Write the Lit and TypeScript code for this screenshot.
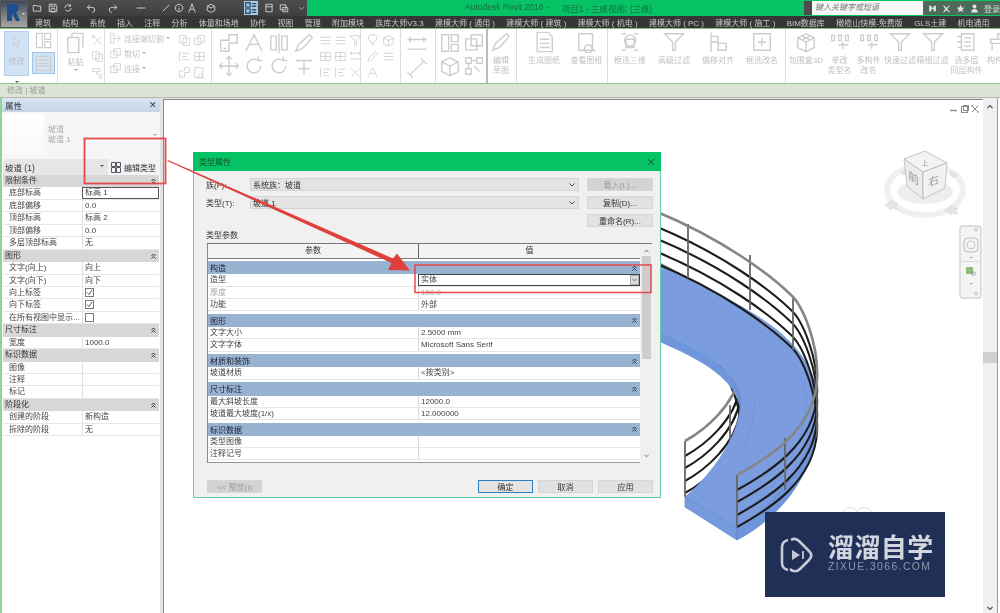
import { LitElement, html, css, svg } from 'lit';
import { customElement } from 'lit/decorators.js';

// generic ribbon glyphs, 16x16, drawn in a washed out grey because the ribbon is disabled
const glyphs: Record<string, string> = {
  cols: 'M2 2h5v12H2zM9 2h5v5H9zM9 9h5v5H9z',
  sheet: 'M3 1h8l3 3v11H3zM5 6h7M5 9h7M5 12h7',
  plan: 'M2 2h12v12H2zM4 5h8M4 8h8M2 10h12',
  paste: 'M2 4h8v11H2zM5 1h8v10M5 4V1',
  cut: 'M3 3l10 10M13 3L3 13M2 2h2v2H2z',
  copy: 'M2 2h8v9H2zM6 5h8v9H6z',
  brush: 'M2 3h9v4H2zM7 7v3h3v5h3v-5',
  link: 'M2 5h8v8H2zM6 2h8v8H6z',
  join: 'M2 2h4v12H2zM6 8h8M10 4l4 4-4 4',
  rect: 'M2 3h12v10H2zM2 8h12M8 3v10',
  move: 'M8 1v14M1 8h14M8 1L6 3M8 1l2 2M8 15l-2-2M8 15l2-2M1 8l2-2M1 8l2 2M15 8l-2-2M15 8l-2 2',
  rotate: 'M13 8a5 5 0 1 1-2-4M11 1v3h3',
  mirror: 'M8 1v14M6 3H2v10h4zM10 3h4v10h-4z',
  offset: 'M2 14V6h6V2h6v6H8v6zM4 12h2',
  split: 'M2 14L8 2l6 12M5 9h6',
  trim: 'M2 4h12M8 4v10M4 10h8',
  align: 'M2 2v12M5 4h9M5 8h6M5 12h8',
  cross: 'M3 3l10 10M13 3L3 13',
  bulb: 'M8 1a4 4 0 0 1 2 8v2H6V9a4 4 0 0 1 2-8zM6 13h4',
  pen: 'M2 14l2-5 8-7 2 2-7 8z',
  lines: 'M2 4h12M2 8h12M2 12h12',
  dim: 'M1 4h14M1 11h14M3 2v4M13 2v4',
  diag: 'M3 13L13 3M1 11l4 4M11 1l4 4',
  box: 'M2 5l6-3 6 3v7l-6 3-6-3zM2 5l6 3 6-3M8 8v7',
  nodes: 'M2 2h4v4H2zM10 2h4v4h-4zM2 10h4v4H2zM6 4h4M4 6v4M8 8l4 4',
  filter: 'M1 2h14L9 8v6H7V8z',
  mag: 'M2 2h10v12H2zM9 10a3 3 0 1 0 .1 0M11 12l3 3',
  cube3: 'M2 2h3M11 2h3M2 14h3M11 14h3M5 6h6v6H5zM8 3a4 4 0 1 0 .1 0',
  offsetAlign: 'M3 1v14M3 4h5v4H3M8 9h6v5H8z',
  rename: 'M2 2h12v12H2zM5 8h6M8 5v6',
  bbox: 'M2 5l6-3 6 3v7l-6 3-6-3zM2 5l6 3 6-3M8 8v7M5 3.5l6 3M11 3.5l-6 3',
  code: 'M2 3h2v4H2zM7 3h2v4H7zM12 3h2v4h-2zM7 10h7M10 8v5',
  list: 'M4 2h9v12H4zM1 4h3M1 8h3M1 12h3M6 5h5M6 8h5M6 11h5',
  desk: 'M2 6h12v3H2zM3 9v5M13 9v5M7 2h2v4H7z',
};

const qatIcons: [string, number][] = [
  ['M2 4h5l1 1h6v8H2z', 36], ['M2 2h10l2 2v10H2zM5 2v4h6V2M5 9h6v5H5z', 52], ['M3 8a5 5 0 0 1 9-3M13 8a5 5 0 0 1-9 3M12 2v3H9', 67],
  ['M2 7h8a4 4 0 0 1 0 8M2 7l4-4M2 7l4 4', 90], ['M14 7H6a4 4 0 0 0 0 8M14 7l-4-4M14 7l-4 4', 112], ['M1 8h14', 140],
  ['M3 13L13 3', 165], ['M8 2a6 6 0 1 0 .1 0M8 5v1M8 8v4', 178], ['M3 15L8 1l5 14M5 10h6', 191], ['M2 5l6-3 6 3v7l-6 3-6-3zM2 5l6 3 6-3', 210],
  ['M8 8h.1', 232], ['M2 2h5v5H2zM9 3h5M9 6h5M2 9h5v5H2zM9 10h5M9 13h5', 248], ['M3 2h10v12H3zM3 6h10', 268], ['M2 3h9v8H2zM6 7h8v7H6z', 283], ['M3 6l5 5 5-5', 302],
];

const tabs = ['建筑', '结构', '系统', '插入', '注释', '分析', '体量和场地', '协作', '视图', '管理', '附加模块', '族库大师V3.3', '建模大师 ( 通用 )',
  '建模大师 ( 建筑 )', '建模大师 ( 机电 )', '建模大师 ( PC )', '建模大师 ( 施工 )', 'BIM数据库', '橄榄山快模-免费版', 'GLS土建', '机电通用'];

type Row = { t: string; v?: string; check?: boolean; box?: boolean };
type Group = { name: string; rows: Row[] };

const propGroups: Group[] = [
  { name: '限制条件', rows: [{ t: '底部标高', v: '标高 1', box: true }, { t: '底部偏移', v: '0.0' }, { t: '顶部标高', v: '标高 2' }, { t: '顶部偏移', v: '0.0' }, { t: '多层顶部标高', v: '无' }] },
  { name: '图形', rows: [{ t: '文字(向上)', v: '向上' }, { t: '文字(向下)', v: '向下' }, { t: '向上标签', check: true }, { t: '向下标签', check: true }, { t: '在所有视图中显示...', check: false }] },
  { name: '尺寸标注', rows: [{ t: '宽度', v: '1000.0' }] },
  { name: '标识数据', rows: [{ t: '图像' }, { t: '注释' }, { t: '标记' }] },
  { name: '阶段化', rows: [{ t: '创建的阶段', v: '新构造' }, { t: '拆除的阶段', v: '无' }] },
];

const typeGroups: Group[] = [
  { name: '构造', rows: [{ t: '造型', v: '实体', box: true }, { t: '厚度', v: '150.0' }, { t: '功能', v: '外部' }] },
  { name: '图形', rows: [{ t: '文字大小', v: '2.5000 mm' }, { t: '文字字体', v: 'Microsoft Sans Serif' }] },
  { name: '材质和装饰', rows: [{ t: '坡道材质', v: '<按类别>' }] },
  { name: '尺寸标注', rows: [{ t: '最大斜坡长度', v: '12000.0' }, { t: '坡道最大坡度(1/x)', v: '12.000000' }] },
  { name: '标识数据', rows: [{ t: '类型图像' }, { t: '注释记号' }] },
];

const OUTER_RAIL = 'M737 475C768 458 814 430 817 380C819 345 803 305 790 294C770 275 725 240 655 211';
const INNER_RAIL = 'M685 441C705 430 735 405 740 373C741 350 725 318 713 303C700 290 680 272 655 262';
const OUTER_POSTS = [[737, 475, 527], [785, 438, 490], [817, 385, 437], [793, 297, 350], [750, 255, 310], [688, 224, 278]];
const INNER_POSTS = [[685, 441, 497], [730, 405, 455], [713, 303, 358]];

@customElement('app-root')
export class AppRoot extends LitElement {
  static styles = css`
    :host {
      display: block;
      font-family: 'Liberation Sans', 'Noto Sans CJK SC', sans-serif;
      font-size: 8px;
      color: #333;
    }
    .app {
      position: relative;
      width: 1000px;
      height: 613px;
      overflow: hidden;
      background: #fff;
      display: flex;
      flex-direction: column;
      filter: blur(0.35px);
    }

    /* title + tabs */
    .head { display: flex; height: 29px; background: #363636; flex: none; }
    .logo {
      width: 28px; height: 28px; flex: none;
      background: linear-gradient(#3d4a5c, #8e8e8e 70%, #a5a5a5);
      border: 1px solid #555; box-sizing: border-box;
    }
    .head-right { flex: 1; display: flex; flex-direction: column; min-width: 0; }
    .titlebar { height: 16px; display: flex; align-items: center; background: #07c365; }
    .qat { width: 279px; height: 16px; flex: none; background: linear-gradient(#4d4d4d, #3f3f3f); display: flex; align-items: center; padding-left: 5px; box-sizing: border-box; }
    .qat-item { display: flex; justify-content: flex-start; flex: none; }
    .qat-item svg { width: 10px; height: 10px; fill: none; stroke: #cfcfcf; stroke-width: 1.5; margin-left: -1px; }
    .qat-item.on svg { background: #a5cdee; stroke: #33506b; width: 14px; height: 14px; }
    .doc { display: flex; gap: 13px; padding-left: 158px; font-size: 8.5px; color: #176b41; white-space: nowrap; flex: none; width: 497px; box-sizing: border-box; }
    .search { display: flex; height: 14px; flex: none; }
    .search-tag { width: 8px; background: #4c4c4c; }
    .search-box { width: 111px; background: #f7f7f7; color: #777; font-style: italic; font-size: 8px; line-height: 13px; padding-left: 3px; box-sizing: border-box; }
    .user { flex: 1; display: flex; align-items: center; gap: 5px; padding-left: 5px; height: 14px; background: #4d6b5a; color: #ddd; overflow: hidden; white-space: nowrap; }
    .user svg { width: 9px; height: 9px; flex: none; fill: #e4e4e4; }
    .tabs { height: 13px; display: flex; gap: 11.3px; padding-left: 7px; align-items: center; color: #c8c8c8; white-space: nowrap; font-size: 8px; overflow: hidden; }

    /* ribbon */
    .ribbon { height: 56px; flex: none; display: flex; background: #fff; border-top: 1px solid #7cc47c; border-bottom: 1px solid #8fcb7f; box-sizing: border-box; margin-top: -1px; color: #c2c2c2; overflow: hidden; }
    .panel { flex: none; height: 100%; border-right: 1px solid #dcdcdc; box-sizing: border-box; display: flex; }
    .panel svg, .tool svg { fill: none; stroke: #cdcdcd; stroke-width: 1; flex: none; }
    .sm svg { width: 13px; height: 13px; }
    .md svg { width: 19px; height: 19px; }
    .lg svg { width: 22px; height: 22px; }
    .grid { display: grid; justify-items: center; align-items: center; align-content: start; }
    .modify { width: 25px; height: 45px; margin: 2px 0 0 4px; background: #d0e3f5; border: 1px solid #b5d0ea; box-sizing: border-box; display: flex; flex-direction: column; align-items: center; gap: 7px; padding-top: 3px; }
    .modify-more { text-align: center; padding: 2px 0 0 4px; }
    .stack2 { display: flex; flex-direction: column; gap: 2px; margin: 2px 0 0 3px; align-items: center; }
    .picked { width: 23px; height: 22px; background: #d0e3f5; border: 1px solid #9fc4e6; box-sizing: border-box; display: flex; align-items: center; justify-content: center; }
    .paste { display: flex; flex-direction: column; align-items: center; width: 30px; padding: 3px 0 0 3px; gap: 2px; }
    .car { width: 0; height: 0; border: 2px solid transparent; border-top: 2.5px solid #aaa; display: inline-block; }
    .car.dark { border-top-color: #555; }
    .text-tools { display: flex; flex-direction: column; gap: 2px; padding: 3px 0 0 4px; width: 64px; }
    .text-tool { display: flex; align-items: center; gap: 2px; height: 13px; white-space: nowrap; }
    .tool { display: flex; flex-direction: column; align-items: center; text-align: center; flex: none; padding-top: 2px; gap: 3px; line-height: 10px; }

    .options { height: 14px; flex: none; background: #dde4d6; border-bottom: 1px solid #b7b9b0; box-sizing: border-box; padding-left: 7px; line-height: 13px; color: #9a9a9a; }

    /* main */
    .main { flex: 1; display: flex; min-height: 0; background: #e2e2e2; }

    .props { width: 160px; flex: none; background: #fff; border-left: 2px solid #8ed49a; box-sizing: border-box; display: flex; flex-direction: column; }
    .props-head { height: 14px; flex: none; display: flex; justify-content: space-between; align-items: center; padding: 0 3px; background: linear-gradient(#d9e4ef, #c6d5e5); color: #334; font-size: 8.5px; }
    .preview { height: 47px; flex: none; display: flex; gap: 4px; padding-left: 1px; background: #f6f6f6; color: #aaa; }
    .thumb { width: 41px; height: 40px; margin-top: 2px; background: linear-gradient(#fff, #f9f9f9); }
    .preview-name { padding-top: 13px; line-height: 10px; flex: 1; }
    .preview-car { align-self: center; margin: 0 3px 0 0; }
    .pick { height: 16px; flex: none; display: flex; }
    .pick-val { width: 105px; margin-left: 1px; background: #e6e6e6; display: flex; justify-content: space-between; align-items: center; padding: 0 4px 0 2px; box-sizing: border-box; font-size: 8.5px; }
    .pick-btn { flex: 1; display: flex; gap: 3px; align-items: center; padding-left: 3px; background: #f3f3f3; font-size: 8px; }
    .pick-btn svg { width: 10px; height: 11px; fill: none; stroke: #556; }
    .sec { height: 12.45px; background: #d7d7d7; margin-left: 1px; width: 156px; display: flex; justify-content: space-between; align-items: center; padding: 0 3px 0 2px; box-sizing: border-box; line-height: 12px; }
    .sec svg, .grp svg { width: 5px; height: 6px; fill: none; stroke: #333; stroke-width: 1; }
    .prop { height: 12.45px; display: grid; grid-template-columns: 79px 77px; margin-left: 1px; width: 156px; border-bottom: 1px solid #e6e6e6; box-sizing: border-box; line-height: 11px; color: #444; }
    .prop > div { padding-left: 6px; white-space: nowrap; overflow: hidden; }
    .prop > div + div { border-left: 1px solid #e0e0e0; padding-left: 2px; }
    .prop .boxed { outline: 1px solid #555; outline-offset: -1px; }
    .chk { width: 9px; height: 9px; border: 1px solid #777; box-sizing: border-box; margin: 1px 0 0 0; display: block; background: #fff; }
    .chk svg { display: block; width: 7px; height: 7px; fill: none; stroke: #555; stroke-width: 1; }

    .split { width: 3px; flex: none; }
    .canvas { flex: 1; position: relative; background: #fff; border-top: 1px solid #8a8a8a; border-left: 1px solid #8a8a8a; margin-top: 1px; min-width: 0; }
    .canvas > svg { display: block; }
    .vbar { width: 14px; flex: none; background: #f0f0f0; display: flex; flex-direction: column; align-items: center; }
    .vbar-thumb { width: 14px; height: 11px; background: #cfcfcf; margin-top: 243px; }
    .vbar svg { width: 6px; height: 5px; fill: none; stroke: #555; stroke-width: 1.2; }
    .vbar .vbar-end { margin-top: auto; margin-bottom: 2px; }
    .vbar .vbar-start { margin-top: 6px; }
    .edge { width: 3px; flex: none; background: #fff; border-left: 1px solid #999; box-sizing: border-box; }

    /* dialog */
    .dialog { position: absolute; left: 193px; top: 152px; width: 468px; height: 346px; box-sizing: border-box; background: #f0f0f0; border: 1px solid #62d0a5; border-top: 0; display: flex; flex-direction: column; }
    .dlg-title { height: 19px; flex: none; margin: 0 -1px; background: #06c365; display: flex; justify-content: space-between; align-items: center; padding: 0 6px; color: #14532f; font-size: 8px; }
    .dlg-title svg { width: 8px; height: 8px; stroke: #14532f; stroke-width: 1; fill: none; }
    .dlg-top { display: grid; grid-template-columns: 44px 329px 66px; grid-template-rows: 13px 13px 13px; row-gap: 5px; column-gap: 0; padding: 7px 0 0 12px; align-items: center; }
    .dlg-sel { height: 13px; background: #e3e3e3; border: 1px solid #d5d5d5; box-sizing: border-box; display: flex; justify-content: space-between; align-items: center; padding: 0 3px 0 2px; }
    .dlg-sel svg { width: 6px; height: 4px; fill: none; stroke: #555; }
    .btn { height: 13px; background: #e1e1e1; border: 1px solid #d6d6d6; box-sizing: border-box; display: flex; align-items: center; justify-content: center; white-space: nowrap; color: #333; }
    .btn.off { background: #d3d3d3; color: #9a9a9a; }
    .btn.main-btn { background: #e4e4e4; border: 1px solid #2f7fbf; }
    .top-btn { margin-left: 8px; width: 66px; }
    .dlg-label { margin: 4px 0 2px 12px; line-height: 10px; }
    .table { margin-left: 13px; width: 445px; height: 219px; display: flex; border-top: 1px solid #777; flex: none; }
    .table-main { width: 433px; flex: none; background: #fff; border-left: 1px solid #888; border-bottom: 1px solid #999; box-sizing: border-box; overflow: hidden; }
    .thead { height: 14.5px; display: grid; grid-template-columns: 210px 222px; background: #f3f3f3; border-bottom: 1px solid #777; box-sizing: border-box; text-align: center; line-height: 13px; }
    .thead div + div { border-left: 1px solid #666; }
    .tbody { padding-top: 2.5px; }
    .grp { height: 13.4px; background: #98b3d2; display: flex; justify-content: space-between; align-items: center; padding: 0 3px 0 2px; color: #223; margin-top: 2.4px; }
    .tbody .grp:first-child { margin-top: 0; }
    .trow { height: 12.3px; display: grid; grid-template-columns: 210px 222px; border-bottom: 1px solid #e6e6e6; box-sizing: border-box; line-height: 11px; color: #444; }
    .trow > div { padding-left: 2px; white-space: nowrap; overflow: hidden; }
    .trow > div + div { border-left: 1px solid #d8d8d8; }
    .trow.faded { color: #aaa; }
    .trow .boxed { outline: 1px solid #444; outline-offset: -1px; display: flex; justify-content: space-between; padding-right: 1px; background: #fff; }
    .combo { width: 9px; height: 10px; background: #ddd; border: 1px solid #aaa; box-sizing: border-box; display: flex; align-items: center; justify-content: center; margin-top: 1px; }
    .combo svg { width: 5px; height: 4px; fill: none; stroke: #444; }
    .tscroll { width: 12px; flex: none; background: #f0f0f0; display: flex; flex-direction: column; align-items: center; padding: 5px 0 3px; box-sizing: border-box; }
    .tscroll svg { width: 5px; height: 4px; fill: none; stroke: #555; stroke-width: 1; flex: none; }
    .tscroll-thumb { width: 9px; height: 103px; background: #cdcdcd; margin-top: 3px; }
    .tscroll-end { margin-top: auto; }
    .dlg-foot { display: flex; padding: 17px 7px 0 13px; }
    .dlg-foot .btn { width: 55px; margin-left: 5px; }
    .dlg-foot .btn:first-child { margin: 0 auto 0 0; }

    /* overlays */
    .marks { position: absolute; left: 0; top: 0; pointer-events: none; }
    .mark { position: absolute; left: 765px; top: 512px; width: 180px; height: 85px; background: #1f2f56; display: flex; align-items: center; padding-left: 15px; box-sizing: border-box; gap: 15px; }
    .mark svg { width: 33px; height: 37px; fill: none; stroke: #c6cad4; stroke-width: 2.6; flex: none; }
    .mark-cn { font-family: 'Noto Sans CJK SC', sans-serif; font-weight: 700; font-size: 26px; line-height: 24px; color: #d3d6de; white-space: nowrap; letter-spacing: 0.4px; margin-top: -2px; }
    .mark-en { font-size: 10.4px; line-height: 12px; margin-top: 3px; letter-spacing: 1.4px; color: #8f97ac; white-space: nowrap; }
  `;

  icon(name: string) {
    return svg`<svg viewBox="0 0 16 16"><path d=${glyphs[name]}></path></svg>`;
  }

  // small / medium / large icon grid
  iconGrid(size: string, cols: number, cell: number, pad: string, names: string[]) {
    return html`<div class="grid ${size}" style="grid-template-columns: repeat(${cols}, ${cell}px); grid-auto-rows: ${size === 'sm' ? 16 : 23}px; padding: ${pad}">
      ${names.map((n) => this.icon(n))}
    </div>`;
  }

  tool(label: string, name: string, width: number) {
    return html`<div class="tool lg" style="width: ${width}px">${this.icon(name)}<span .innerHTML=${label}></span></div>`;
  }

  renderHead() {
    return html`<div class="head">
      <div class="logo">
        <svg viewBox="0 0 26 26" width="26" height="26"><path d="M6 3h8c4 0 5 6 1 8l4 9h-4l-4-8v8H6z" fill="#1d4e8f"></path><path d="M21 12h3l-1.500 2z" fill="#ddd"></path></svg>
      </div>
      <div class="head-right">
        <div class="titlebar">
          <div class="qat">
            ${qatIcons.map(([d, x], i) => {
              const next = i + 1 < qatIcons.length ? qatIcons[i + 1][1] : x + 6;
              return html`<div class="qat-item ${x === 248 ? 'on' : ''}" style="width: ${next - x}px">
                <svg viewBox="0 0 16 16"><path d=${d}></path></svg>
              </div>`;
            })}
          </div>
          <div class="doc"><span>Autodesk Revit 2016 -</span><span>项目1 - 三维视图: {三维}</span></div>
          <div class="search"><div class="search-tag"></div><div class="search-box">键入关键字或短语</div></div>
          <div class="user">
            <svg viewBox="0 0 16 16"><path d="M2 3h4v10H2zM10 3h4v10h-4zM6 6h4v3H6z"></path></svg>
            <svg viewBox="0 0 16 16"><path d="M3 2l5 5 5-5 1 1-5 6 5 5-1 1-5-4-5 4-1-1 4-5-4-6z"></path></svg>
            <svg viewBox="0 0 16 16"><path d="M8 1l2 5 5 .5-4 3.500 1.500 5L8 12l-4.500 3L5 10 1 6.500 6 6z"></path></svg>
            <svg viewBox="0 0 16 16"><path d="M8 1a3.500 3.500 0 1 1-.1 0zM2 15c0-8 12-8 12 0z"></path></svg>
            <span>登录</span>
          </div>
        </div>
        <div class="tabs">${tabs.map((t) => html`<span>${t}</span>`)}</div>
      </div>
    </div>`;
  }

  renderRibbon() {
    return html`<div class="ribbon">
      <div class="panel" style="width: 58px">
        <div>
          <div class="modify sm">
            <svg viewBox="0 0 16 16"><path d="M4 1v12l3-3 2 5 2-1-2-5h4z"></path></svg>
            <span>修改</span>
          </div>
          <div class="modify-more"><span class="car dark"></span></div>
        </div>
        <div class="stack2 md">
          ${this.icon('cols')}
          <div class="picked">${this.icon('plan')}</div>
        </div>
      </div>
      <div class="panel" style="width: 47px">
        <div class="paste lg">${this.icon('paste')}<span>粘贴</span><span class="car"></span></div>
        ${this.iconGrid('sm', 1, 14, '3px 0 0 0', ['cut', 'copy', 'brush'])}
      </div>
      <div class="panel" style="width: 107px">
        <div class="text-tools sm">
          <div class="text-tool">${this.icon('join')}<span>连接端切割</span><span class="car"></span></div>
          <div class="text-tool">${this.icon('link')}<span>剪切</span><span class="car"></span></div>
          <div class="text-tool">${this.icon('link')}<span>连接</span><span class="car"></span></div>
        </div>
        ${this.iconGrid('sm', 2, 15, '3px 0 0 4px', ['copy', 'link', 'align', 'rect', 'offset', 'mag'])}
      </div>
      <div class="panel" style="width: 149px">
        ${this.iconGrid('lg', 4, 25, '2px 0 0 4px', ['offset', 'split', 'mirror', 'pen', 'move', 'rotate', 'rotate', 'trim'])}
        ${this.iconGrid('sm', 3, 15, '3px 0 0 2px', ['lines', 'lines', 'filter', 'rect', 'rect', 'dim', 'align', 'align', 'cross'])}
      </div>
      <div class="panel" style="width: 40px">
        ${this.iconGrid('sm', 2, 16, '3px 0 0 3px', ['bulb', 'box', 'pen', 'lines', 'split'])}
      </div>
      <div class="panel" style="width: 35px">
        ${this.iconGrid('lg', 1, 26, '4px 0 0 3px', ['dim', 'diag'])}
      </div>
      <div class="panel" style="width: 52px; border-right: 2px solid #bbb">
        ${this.iconGrid('lg', 2, 24, '2px 0 0 2px', ['cols', 'link', 'box', 'nodes'])}
      </div>
      <div class="panel" style="width: 29px">${this.tool('编辑<br>草图', 'pen', 26)}</div>
      <div class="panel" style="width: 91px; padding-left: 5px">
        ${this.tool('生成图纸', 'sheet', 44)}${this.tool('查看图纸', 'mag', 41)}
      </div>
      <div class="panel" style="width: 178px">
        ${this.tool('框选三维', 'cube3', 44)}${this.tool('高级过滤', 'filter', 44)}${this.tool('偏移对齐', 'offsetAlign', 44)}${this.tool('框选改名', 'rename', 44)}
      </div>
      <div class="panel" style="width: 216px; border-right: 0">
        ${this.tool('包围盒3D', 'bbox', 40)}${this.tool('单改<br>类型名', 'code', 27)}${this.tool('多构件<br>改名', 'code', 31)}${this.tool('快速过滤', 'filter', 32)}${this.tool('精细过滤', 'filter', 33)}${this.tool('选多层<br>同层构件', 'list', 35)}${this.tool('构件说', 'desk', 30)}
      </div>
    </div>
    <div class="options">修改 | 坡道</div>`;
  }

  collapse() {
    return svg`<svg viewBox="0 0 5 6"><path d="M.5 3L2.500 1 4.500 3M.5 5.500L2.500 3.500 4.500 5.500"></path></svg>`;
  }

  chevron() {
    return svg`<svg viewBox="0 0 6 4"><path d="M.5 .5L3 3 5.500 .5"></path></svg>`;
  }

  renderProps() {
    return html`<div class="props">
      <div class="props-head"><span>属性</span><span>✕</span></div>
      <div class="preview"><div class="thumb"></div><div class="preview-name">坡道<br>坡道 1</div><span class="car preview-car"></span></div>
      <div class="pick">
        <div class="pick-val"><span>坡道 (1)</span><span class="car dark"></span></div>
        <div class="pick-btn">
          <svg viewBox="0 0 10 11"><path d="M.5 .5h4v4h-4zM5.500 .5h4v4h-4zM.5 5.500h4v5h-4zM5.500 5.500h4v5h-4z"></path></svg>
          <span>编辑类型</span>
        </div>
      </div>
      ${propGroups.map((g) => html`
        <div class="sec"><span>${g.name}</span>${this.collapse()}</div>
        ${g.rows.map((r) => html`<div class="prop">
          <div>${r.t}</div>
          <div class=${r.box ? 'boxed' : ''}>
            ${r.check === undefined ? (r.v ?? '') : html`<span class="chk">${r.check ? svg`<svg viewBox="0 0 7 7"><path d="M1 3.500l2 2 3-4.500"></path></svg>` : ''}</span>`}
          </div>
        </div>`)}
      `)}
    </div>`;
  }

  renderModel() {
    const rails = (d: string) => [15, 27, 40, 52].map((dy) => svg`<path d=${d} transform="translate(0 ${dy})" fill="none" stroke="#1c1c1c" stroke-width="2.1"></path>`);
    const posts = (list: number[][]) => list.map(([x, a, b]) => svg`<path d="M${x} ${a}V${b}" stroke="#666" stroke-width="1.8"></path>`);
    return svg`<svg width="819" height="513" viewBox="164 100 819 513">
      <!-- ramp -->
      <path d="M685 497L737 527V540L685 507Z" fill="#769ade" stroke="#5d80c8" stroke-width=".6"></path>
      <path d="M737 527C775 505 815 460 817 400V420C815 480 775 520 737 540Z" fill="#6f95db" stroke="#5d80c8" stroke-width=".6"></path>
      ${rails(INNER_RAIL)}
      ${posts(INNER_POSTS)}
      <path d=${INNER_RAIL} fill="none" stroke="#858585" stroke-width="2.6"></path>
      <path d="M655 331C690 345 735 365 740 398V408C735 375 690 355 655 340Z" fill="#6f95db"></path>
      <path d="M685 497L737 527C775 505 815 460 817 400C818 370 795 345 777 330C745 305 700 285 655 262L655 331C690 345 735 365 740 398C743 430 715 472 685 497Z" fill="#7b9de0" stroke="#6687cf" stroke-width=".6"></path>
      <path d="M695 503C730 480 755 440 755 398C750 365 700 340 655 318" fill="none" stroke="#6c8dd6" stroke-width=".6"></path>
      <path d="M737 515C770 495 805 455 806 400C806 375 785 350 765 335C740 315 700 295 655 275" fill="none" stroke="#6c8dd6" stroke-width=".6"></path>
      ${rails(OUTER_RAIL)}
      ${posts(OUTER_POSTS)}
      <path d=${OUTER_RAIL} fill="none" stroke="#858585" stroke-width="2.6"></path>
      <path d="M843 512C846 506 854 506 857 512C860 506 868 506 871 512" fill="none" stroke="#e4e4e4" stroke-width="1.2"></path>
      <!-- view cube -->
      <ellipse cx="925" cy="190" rx="38" ry="25" fill="none" stroke="#f0f0f0" stroke-width="6"></ellipse>
      <ellipse cx="925" cy="192" rx="28" ry="12" fill="#eeeeee"></ellipse>
      <g fill="#e4e4e4" stroke="#d2d2d2" stroke-width=".5">
        <path d="M888 203l4-3 2 3 4 0-2 3 2 3-5-1-3 2-1-3-4-1z"></path>
        <path d="M948 208l4-3 2 3 4 0-2 3 2 3-5-1-3 2-1-3-4-1z"></path>
        <path d="M902 171l4-2 2 3-3 3-3-1z"></path>
        <path d="M950 172l4 1 3 2-2 3-4-2z"></path>
      </g>
      <path d="M904 159L925 151L947 163L923 172Z" fill="#f4f4f4" stroke="#b0b0b0" stroke-width=".7"></path>
      <path d="M904 159L923 172L923 199L907 186Z" fill="#ececec" stroke="#b0b0b0" stroke-width=".7"></path>
      <path d="M923 172L947 163L945 188L923 199Z" fill="#f1f1f1" stroke="#b0b0b0" stroke-width=".7"></path>
      <text x="925" y="165" font-size="6" fill="#999" text-anchor="middle">上</text>
      <text transform="translate(908 178) skewY(35)" font-size="11" fill="#9a9a9a">前</text>
      <text transform="translate(928 187) skewY(-22)" font-size="11" fill="#9a9a9a">右</text>
      <!-- navigation bar -->
      <rect x="960" y="226" width="21" height="72" rx="3" fill="#f4f4f4" stroke="#d4d4d4" stroke-width="1.4"></rect>
      <circle cx="976" cy="229.500" r="1.500" fill="none" stroke="#aaa" stroke-width=".7"></circle>
      <circle cx="976" cy="293.500" r="1.500" fill="none" stroke="#aaa" stroke-width=".7"></circle>
      <rect x="964" y="238" width="14" height="14" rx="4" fill="none" stroke="#bbb" stroke-width="1"></rect>
      <circle cx="971" cy="245" r="4" fill="none" stroke="#c4c4c4" stroke-width="1"></circle>
      <path d="M970 257h2l-1 1.500z" fill="#666"></path>
      <path d="M962 261.500h17" stroke="#d8d8d8"></path>
      <rect x="966" y="267" width="7" height="7" fill="#8fbb80"></rect>
      <circle cx="973.500" cy="273.500" r="1.700" fill="none" stroke="#777" stroke-width=".7"></circle>
      <path d="M970 283h2l-1 1.500z" fill="#666"></path>
      <!-- window buttons -->
      <g fill="none" stroke="#8c8c8c" stroke-width="1">
        <path d="M950 110.500h7" stroke-width="1.500"></path>
        <rect x="961.500" y="106.500" width="6" height="6"></rect>
        <rect x="963.500" y="105.500" width="5" height="5"></rect>
        <path d="M972 106l3 3-3 3M978 106l-3 3 3 3M971 106h2M977 112h2"></path>
      </g>
    </svg>`;
  }

  renderDialog() {
    return html`<div class="dialog">
      <div class="dlg-title"><span>类型属性</span><svg viewBox="0 0 8 8"><path d="M1 1l6 6M7 1L1 7"></path></svg></div>
      <div class="dlg-top">
        <span>族(F):</span>
        <div class="dlg-sel"><span>系统族：坡道</span>${this.chevron()}</div>
        <div class="btn off top-btn">载入(L)...</div>
        <span>类型(T):</span>
        <div class="dlg-sel"><span>坡道 1</span>${this.chevron()}</div>
        <div class="btn top-btn">复制(D)...</div>
        <span></span><span></span>
        <div class="btn top-btn">重命名(R)...</div>
      </div>
      <div class="dlg-label">类型参数</div>
      <div class="table">
        <div class="table-main">
          <div class="thead"><div>参数</div><div>值</div></div>
          <div class="tbody">
            ${typeGroups.map((g) => html`
              <div class="grp"><span>${g.name}</span>${this.collapse()}</div>
              ${g.rows.map((r) => html`<div class="trow ${r.t === '厚度' ? 'faded' : ''}">
                <div>${r.t}</div>
                ${r.box
                  ? html`<div class="boxed"><span>${r.v}</span><span class="combo">${this.chevron()}</span></div>`
                  : html`<div>${r.v ?? ''}</div>`}
              </div>`)}
            `)}
          </div>
        </div>
        <div class="tscroll">
          <svg viewBox="0 0 6 4"><path d="M.5 3.500L3 1 5.500 3.500"></path></svg>
          <div class="tscroll-thumb"></div>
          <span class="tscroll-end">${this.chevron()}</span>
        </div>
      </div>
      <div class="dlg-foot">
        <div class="btn off">&lt;&lt; 预览(I)</div>
        <div class="btn main-btn">确定</div>
        <div class="btn">取消</div>
        <div class="btn">应用</div>
      </div>
    </div>`;
  }

  render() {
    return html`<div class="app">
      ${this.renderHead()}
      ${this.renderRibbon()}
      <div class="main">
        ${this.renderProps()}
        <div class="split"></div>
        <div class="canvas">${this.renderModel()}</div>
        <div class="vbar">
          <svg class="vbar-start" viewBox="0 0 6 5"><path d="M.5 4L3 1.500 5.500 4"></path></svg>
          <div class="vbar-thumb"></div>
          <svg class="vbar-end" viewBox="0 0 6 5"><path d="M.5 1L3 3.500 5.500 1"></path></svg>
        </div>
        <div class="edge"></div>
      </div>
      ${this.renderDialog()}
      <svg class="marks" width="1000" height="613" viewBox="0 0 1000 613">
        <rect x="84.500" y="138.500" width="81" height="45" fill="none" stroke="#e8484a" stroke-width="1.800"></rect>
        <rect x="415" y="265" width="236" height="27.500" fill="none" stroke="#e8484a" stroke-width="1.500"></rect>
        <path d="M168 160L393 258.500L397 253.500L410 270.500L388 270L391.500 263L167.500 161Z" fill="#e0403c"></path>
      </svg>
      <div class="mark">
        <svg viewBox="0 0 33 37"><path d="M8 4C4 5 2 7 2 11V27C2 31 4 33 8 34"></path><path d="M11 4C14 2 17 3 19 5L29 15C32 18 32 21 29 24L20 33C17 36 13 36 10 33"></path><path d="M12 14L20 19L12 24Z" fill="#c6cad4" stroke="none"></path><path d="M23 15V23" stroke-width="1.800"></path></svg>
        <div>
          <div class="mark-cn">溜溜自学</div>
          <div class="mark-en">ZIXUE.3066.COM</div>
        </div>
      </div>
    </div>`;
  }
}
